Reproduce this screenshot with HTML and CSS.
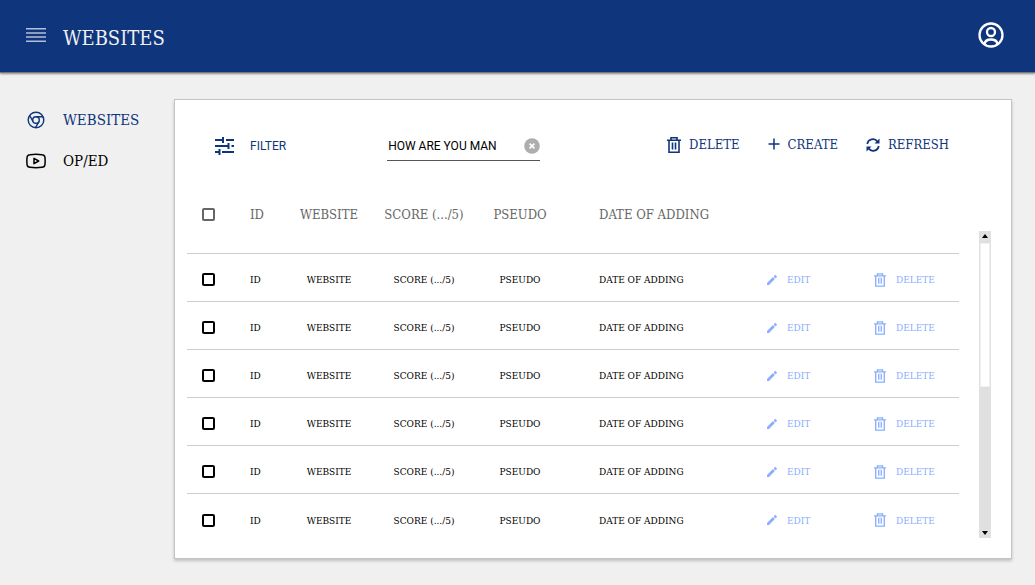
FILE: index.html
```html
<!DOCTYPE html>
<html lang="en">
<head>
<meta charset="utf-8">
<meta name="viewport" content="width=device-width, initial-scale=1">
<title>Websites</title>
<link rel="stylesheet" href="styles.css">
</head>
<body>
<svg class="symbols" aria-hidden="true">
  <symbol id="trash" viewBox="0 0 14 16">
    <path d="M0 3.200h14M4 3V.800h6V3M2 3v12.200h10V3M5.500 5.500v7M8.500 5.500v7" fill="none" stroke="currentColor" stroke-width="1.600"/>
  </symbol>
  <symbol id="pencil" viewBox="0 0 10 10">
    <path d="M0 10V8l5.900-5.900 2 2L2 10zM6.600 1.400L7.700.3a.8.8 0 0 1 1.100 0l.9.9a.8.8 0 0 1 0 1.100L8.600 3.400z" fill="currentColor"/>
  </symbol>
</svg>
<header class="topbar">
  <button class="icon-button menu" type="button" aria-label="Menu">
    <svg width="20" height="14" viewBox="0 0 20 14"><path d="M0 .8h20M0 5h20M0 9h20M0 13.200h20" stroke="#b4c0d8" stroke-width="1.600"/></svg>
  </button>
  <h1 class="title">WEBSITES</h1>
  <button class="icon-button account" type="button" aria-label="Account">
    <svg width="26" height="26" viewBox="0 0 26 26" fill="none" stroke="#fff" stroke-width="2.300"><circle cx="13" cy="13" r="11.500"/><circle cx="13" cy="10" r="4"/><path d="M6.500 22c.5-3 3-4.500 6.500-4.500s6 1.500 6.500 4.500"/></svg>
  </button>
</header>
<div class="layout">
  <nav class="sidebar">
    <a class="nav-link active" href="#websites">
      <svg class="nav-icon" viewBox="0 0 20 20" fill="none" stroke="currentColor" stroke-width="1.400"><circle cx="10" cy="10" r="7.800"/><circle cx="10" cy="10" r="3.300"/><path d="M10 6.700h7.100M7.100 11.700L3.700 5.500M12.900 11.700L9.500 17.700"/></svg>
      WEBSITES</a>
    <a class="nav-link" href="#op-ed">
      <svg class="nav-icon" viewBox="0 0 20 20" fill="none" stroke="currentColor" stroke-width="1.500" stroke-linejoin="round"><path d="M4 3.700Q10 3 16 3.700Q18.600 3.900 18.900 6.200Q19.400 10 18.900 13.800Q18.600 16.100 16 16.300Q10 17 4 16.300Q1.400 16.100 1.100 13.800Q.6 10 1.100 6.200Q1.400 3.900 4 3.700z"/><path d="M8 7.300v5.400l4.700-2.700z"/></svg>
      OP/ED</a>
  </nav>
  <main class="card">
    <div class="toolbar">
      <button class="action filter" type="button">
        <svg width="20" height="18" viewBox="0 0 20 18" fill="none" stroke="currentColor" stroke-width="2"><path d="M0 3h8M11 3h8M8 0v6M0 9h13M16.500 9H19M13.500 6v6M0 15h4.500M7 15h12M4.500 12v6"/></svg>
        FILTER</button>
      <div class="search">
        <input class="search-input" type="text" aria-label="Search" value="HOW ARE YOU MAN">
        <button class="icon-button" type="button" aria-label="Clear search">
          <svg width="16" height="16" viewBox="0 0 16 16"><circle cx="8" cy="8" r="7.800" fill="#aeaeae"/><path d="M5.600 5.600l4.800 4.800M10.400 5.600l-4.800 4.800" stroke="#fff" stroke-width="1.700"/></svg>
        </button>
      </div>
      <div class="actions">
        <button class="action" type="button"><svg width="14" height="16"><use href="#trash"/></svg>DELETE</button>
        <button class="action" type="button"><svg width="12" height="16" viewBox="0 0 12 16"><path d="M.5 7h11M6 1.500v11" stroke="currentColor" stroke-width="1.500"/></svg>CREATE</button>
        <button class="action" type="button"><svg width="14" height="14" viewBox="0 0 14 14" fill="none" stroke="currentColor" stroke-width="1.800"><path d="M1.300 6A5.600 5.600 0 0 1 11.500 3.700M12.700 8A5.600 5.600 0 0 1 2.500 10.300"/><path d="M13.500.5v5h-5zM.5 13.500v-5h5z" fill="currentColor" stroke="none"/></svg>REFRESH</button>
      </div>
    </div>
    <div class="table-area">
      <table class="table">
        <colgroup><col class="c-check"><col class="c-id"><col class="c-site"><col class="c-score"><col class="c-pseudo"><col class="c-date"><col class="c-edit"><col class="c-delete"></colgroup>
        <thead>
          <tr><th><input class="check" type="checkbox" aria-label="Select all"></th><th>ID</th><th class="center">WEBSITE</th><th class="center">SCORE (.../5)</th><th class="center">PSEUDO</th><th class="date">DATE OF ADDING</th><td></td><td></td></tr>
        </thead>
        <tbody>
          <tr><td><input class="check" type="checkbox" aria-label="Select row 1"></td><td>ID</td><td class="center">WEBSITE</td><td class="center">SCORE (.../5)</td><td class="center">PSEUDO</td><td class="date">DATE OF ADDING</td><td><button class="row-action" type="button"><svg width="10" height="10"><use href="#pencil"/></svg>EDIT</button></td><td><button class="row-action" type="button"><svg width="12" height="14"><use href="#trash"/></svg>DELETE</button></td></tr>
          <tr><td><input class="check" type="checkbox" aria-label="Select row 2"></td><td>ID</td><td class="center">WEBSITE</td><td class="center">SCORE (.../5)</td><td class="center">PSEUDO</td><td class="date">DATE OF ADDING</td><td><button class="row-action" type="button"><svg width="10" height="10"><use href="#pencil"/></svg>EDIT</button></td><td><button class="row-action" type="button"><svg width="12" height="14"><use href="#trash"/></svg>DELETE</button></td></tr>
          <tr><td><input class="check" type="checkbox" aria-label="Select row 3"></td><td>ID</td><td class="center">WEBSITE</td><td class="center">SCORE (.../5)</td><td class="center">PSEUDO</td><td class="date">DATE OF ADDING</td><td><button class="row-action" type="button"><svg width="10" height="10"><use href="#pencil"/></svg>EDIT</button></td><td><button class="row-action" type="button"><svg width="12" height="14"><use href="#trash"/></svg>DELETE</button></td></tr>
          <tr><td><input class="check" type="checkbox" aria-label="Select row 4"></td><td>ID</td><td class="center">WEBSITE</td><td class="center">SCORE (.../5)</td><td class="center">PSEUDO</td><td class="date">DATE OF ADDING</td><td><button class="row-action" type="button"><svg width="10" height="10"><use href="#pencil"/></svg>EDIT</button></td><td><button class="row-action" type="button"><svg width="12" height="14"><use href="#trash"/></svg>DELETE</button></td></tr>
          <tr><td><input class="check" type="checkbox" aria-label="Select row 5"></td><td>ID</td><td class="center">WEBSITE</td><td class="center">SCORE (.../5)</td><td class="center">PSEUDO</td><td class="date">DATE OF ADDING</td><td><button class="row-action" type="button"><svg width="10" height="10"><use href="#pencil"/></svg>EDIT</button></td><td><button class="row-action" type="button"><svg width="12" height="14"><use href="#trash"/></svg>DELETE</button></td></tr>
          <tr><td><input class="check" type="checkbox" aria-label="Select row 6"></td><td>ID</td><td class="center">WEBSITE</td><td class="center">SCORE (.../5)</td><td class="center">PSEUDO</td><td class="date">DATE OF ADDING</td><td><button class="row-action" type="button"><svg width="10" height="10"><use href="#pencil"/></svg>EDIT</button></td><td><button class="row-action" type="button"><svg width="12" height="14"><use href="#trash"/></svg>DELETE</button></td></tr>
        </tbody>
      </table>
      <div class="scrollbar">
        <button class="scroll-button" type="button" aria-label="Scroll up"><svg width="6" height="4" viewBox="0 0 6 4"><path d="M3 0l3 4H0z"/></svg></button>
        <div class="scroll-track"><div class="scroll-thumb"></div></div>
        <button class="scroll-button down" type="button" aria-label="Scroll down"><svg width="6" height="4" viewBox="0 0 6 4"><path d="M0 0h6L3 4z"/></svg></button>
      </div>
    </div>
  </main>
</div>
</body>
</html>
```
FILE: styles.css
```css
* { box-sizing: border-box; }
body {
  margin: 0;
  min-height: 100vh;
  background: #f0f0f0;
  color: #000;
  font-family: "DejaVu Serif Condensed", "Liberation Serif", serif;
}
button {
  padding: 0;
  border: 0;
  background: none;
  color: inherit;
  font: inherit;
  cursor: pointer;
}
svg { display: block; flex: none; }
.symbols { position: absolute; width: 0; height: 0; }

.topbar {
  display: flex;
  align-items: center;
  height: 72px;
  padding: 0 31px 2px 26px;
  background: #0f357c;
  box-shadow: 0 1px 0 #777, 0 2px 2px #888;
}
.title {
  margin: 6px 0 0 17px;
  color: #f0f0f0;
  font-size: 20px;
  font-weight: 400;
  line-height: 24px;
}
.account { margin-left: auto; }

.layout {
  display: flex;
  align-items: flex-start;
  padding: 27px 23px 26px 0;
}
.sidebar {
  display: flex;
  flex: 0 0 174px;
  flex-direction: column;
  gap: 17px;
  padding: 9px 0 0 26px;
}
.nav-link {
  display: flex;
  align-items: center;
  gap: 17px;
  color: #000;
  font-size: 15px;
  line-height: 24px;
  text-decoration: none;
}
.nav-link.active { color: #0f357c; }
.nav-icon { width: 20px; height: 20px; }

.card {
  flex: 1;
  min-width: 0;
  padding-bottom: 16px;
  border: 1px solid #c4c4c4;
  background: #fff;
  box-shadow: 0 2px 3px rgba(0, 0, 0, .2);
}
.toolbar {
  display: flex;
  align-items: flex-start;
  height: 76px;
  padding: 30px 62px 0 40px;
  color: #0f357c;
}
.action {
  display: flex;
  align-items: center;
  gap: 8px;
  font-size: 13px;
  line-height: 30px;
}
.filter {
  gap: 15px;
  font-family: Roboto, sans-serif;
  font-size: 12px;
  line-height: 32px;
}
.search {
  display: flex;
  align-items: center;
  width: 153px;
  height: 31px;
  margin-left: 101px;
  padding-top: 2px;
  border-bottom: 1px solid #555;
}
.search-input {
  flex: 1;
  min-width: 0;
  padding: 0 0 0 1px;
  border: 0;
  outline: 0;
  background: none;
  color: #000;
  font-family: Roboto, sans-serif;
  font-size: 12px;
}
.actions { display: flex; gap: 28px; margin-left: auto; }

.table-area { display: flex; gap: 20px; padding: 0 20px 0 12px; }
.table {
  flex: 1;
  width: 0;
  table-layout: fixed;
  border-collapse: separate;
  border-spacing: 0;
  font-size: 10px;
}
.c-check { width: 63px; }
.c-id { width: 42px; }
.c-site { width: 74px; }
.c-score { width: 116px; }
.c-pseudo { width: 76px; }
.c-date { width: 209px; }
.c-edit { width: 107px; }
.c-delete { width: 85px; }
.table th, .table td {
  height: 48px;
  padding: 4px 0 0;
  text-align: left;
  white-space: nowrap;
  border-bottom: 1px solid #ccc;
}
.table thead th, .table thead td {
  height: 78px;
  padding: 0;
  color: #666;
  font-size: 13px;
  font-weight: 400;
}
.table tbody tr:last-child td { border-bottom: 0; }
.table .center { text-align: center; }
.table .date { padding-left: 41px; }
.check {
  display: block;
  appearance: none;
  width: 13px;
  height: 13px;
  margin: 0 0 0 15px;
  border: 2px solid #000;
  border-radius: 2px;
}
thead .check { border-color: #666; }
.row-action {
  display: flex;
  align-items: center;
  gap: 10px;
  color: #8ab0fa;
}

.scrollbar {
  display: flex;
  flex: 0 0 12px;
  flex-direction: column;
  margin: 55px 0 4px;
  background: #e0e0e0;
}
.scroll-button {
  display: flex;
  justify-content: center;
  height: 12px;
  padding-top: 3px;
}
.scroll-button.down { padding-top: 5px; }
.scroll-track { flex: 1; padding: 0 1px; }
.scroll-thumb {
  height: 51%;
  border: 1px solid #f0f0f0;
  background: #fff;
}
```
